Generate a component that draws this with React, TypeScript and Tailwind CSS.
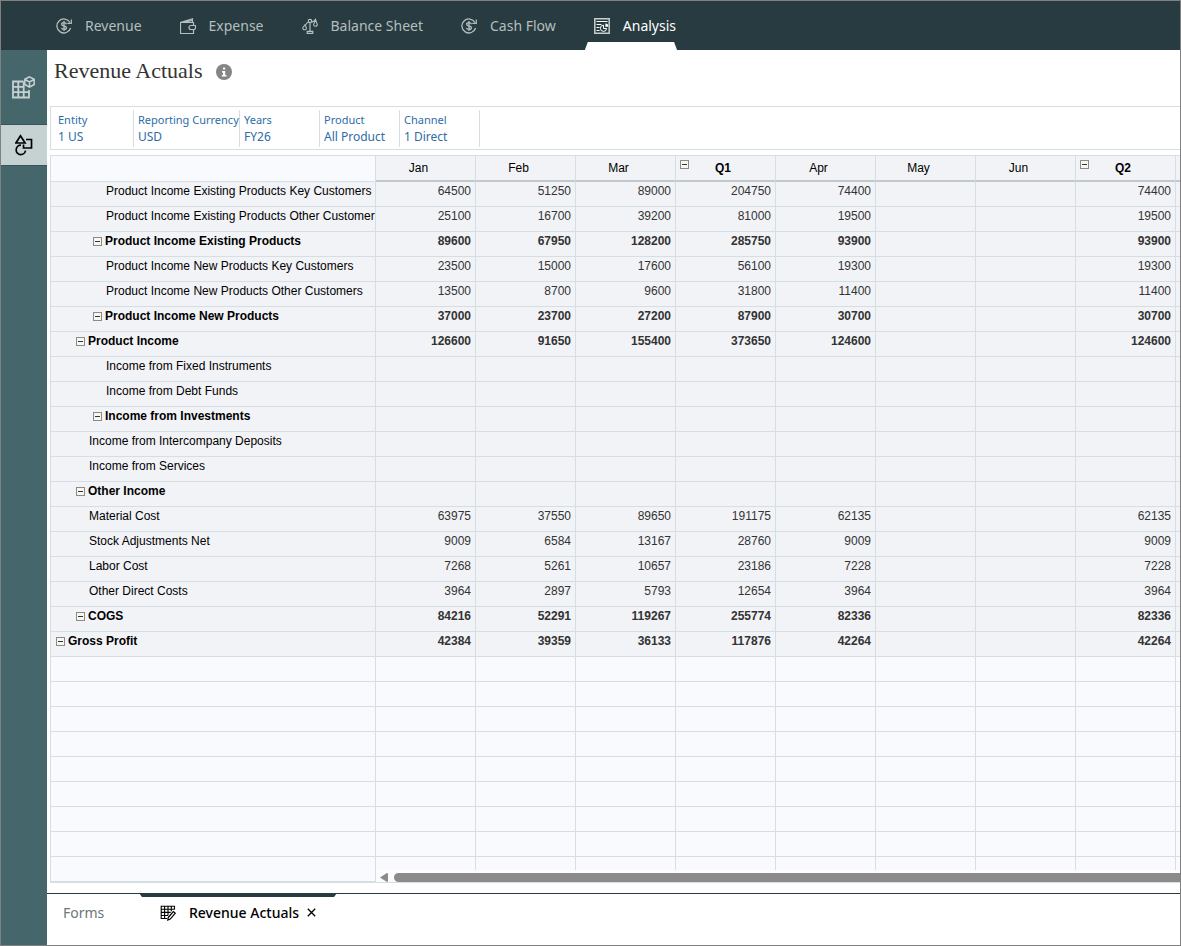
import clsx from 'clsx'
import { type ReactNode } from 'react'

const months = ['Jan', 'Feb', 'Mar', 'Q1', 'Apr', 'May', 'Jun', 'Q2']

type Row = {
  label: string
  indent: string
  total?: boolean
  values?: number[]
}

// values are Jan, Feb, Mar, Q1, Apr, Q2
const rows: Row[] = [
  { label: 'Product Income Existing Products Key Customers', indent: 'pl-[55px]', values: [64500, 51250, 89000, 204750, 74400, 74400] },
  { label: 'Product Income Existing Products Other Customer', indent: 'pl-[55px]', values: [25100, 16700, 39200, 81000, 19500, 19500] },
  { label: 'Product Income Existing Products', indent: 'pl-[42px]', total: true, values: [89600, 67950, 128200, 285750, 93900, 93900] },
  { label: 'Product Income New Products Key Customers', indent: 'pl-[55px]', values: [23500, 15000, 17600, 56100, 19300, 19300] },
  { label: 'Product Income New Products Other Customers', indent: 'pl-[55px]', values: [13500, 8700, 9600, 31800, 11400, 11400] },
  { label: 'Product Income New Products', indent: 'pl-[42px]', total: true, values: [37000, 23700, 27200, 87900, 30700, 30700] },
  { label: 'Product Income', indent: 'pl-[25px]', total: true, values: [126600, 91650, 155400, 373650, 124600, 124600] },
  { label: 'Income from Fixed Instruments', indent: 'pl-[55px]' },
  { label: 'Income from Debt Funds', indent: 'pl-[55px]' },
  { label: 'Income from Investments', indent: 'pl-[42px]', total: true },
  { label: 'Income from Intercompany Deposits', indent: 'pl-[38px]' },
  { label: 'Income from Services', indent: 'pl-[38px]' },
  { label: 'Other Income', indent: 'pl-[25px]', total: true },
  { label: 'Material Cost', indent: 'pl-[38px]', values: [63975, 37550, 89650, 191175, 62135, 62135] },
  { label: 'Stock Adjustments Net', indent: 'pl-[38px]', values: [9009, 6584, 13167, 28760, 9009, 9009] },
  { label: 'Labor Cost', indent: 'pl-[38px]', values: [7268, 5261, 10657, 23186, 7228, 7228] },
  { label: 'Other Direct Costs', indent: 'pl-[38px]', values: [3964, 2897, 5793, 12654, 3964, 3964] },
  { label: 'COGS', indent: 'pl-[25px]', total: true, values: [84216, 52291, 119267, 255774, 82336, 82336] },
  { label: 'Gross Profit', indent: 'pl-[5px]', total: true, values: [42384, 39359, 36133, 117876, 42264, 42264] },
]

const valueIndex = [0, 1, 2, 3, 4, -1, -1, 5]

const dimensions = [
  { name: 'Entity', member: '1 US', className: 'w-[83px] pl-[7px]' },
  { name: 'Reporting Currency', member: 'USD', className: 'w-[106px] pl-1' },
  { name: 'Years', member: 'FY26', className: 'w-20 pl-1' },
  { name: 'Product', member: 'All Product', className: 'w-20 pl-1' },
  { name: 'Channel', member: '1 Direct', className: 'w-20 pl-1' },
]

function Svg({ children, size = 'size-4', box = '0 0 16 16' }: { children: ReactNode; size?: string; box?: string }) {
  return (
    <svg viewBox={box} className={clsx('shrink-0', size)} fill="none" stroke="currentColor" aria-hidden="true">
      {children}
    </svg>
  )
}

function MoneyIcon() {
  return (
    <Svg>
      <path d="M14 4.500A7 7 0 1 0 14.600 10" strokeWidth="1.300" />
      <path d="M15.300 1.500v3.800h-4" strokeWidth="1.200" />
      <path d="M10.500 6.200c-.3-1-1.200-1.500-2.500-1.500-1.500 0-2.400.6-2.400 1.600C5.600 8.700 10.500 7.300 10.500 9.700c0 1.100-1 1.700-2.500 1.700-1.400 0-2.300-.5-2.600-1.500M8 3v10" strokeWidth="1.300" />
    </Svg>
  )
}

function WalletIcon() {
  return (
    <Svg>
      <path d="M.5 4.500h13v3M13.500 11.500v4H.5v-11L12.500.8v3.700M4 4.300l8-2" strokeWidth="1.200" />
      <path d="M15.500 7.500H11a2 2 0 0 0 0 4h3.500l1-1z" strokeWidth="1.200" />
    </Svg>
  )
}

function ScalesIcon() {
  return (
    <Svg>
      <path d="M8 5v8.500M5.200 15.400h5.600v-2H5.200zM3.300 7.500C4.500 5 5 4.300 6.500 4M9.500 3.800c1.500.4 2.800-.8 4.200-2.500" strokeWidth="1.200" />
      <circle cx="8" cy="3" r="1.700" strokeWidth="1.200" />
      <path d="M2.800 7 .8 9.800c-.3 2.600 3.700 2.600 3.700.2zM13.500 1.500l-1.900 5c0 2.300 3.800 2.300 3.700 0z" strokeWidth="1.100" />
    </Svg>
  )
}

function AnalysisIcon() {
  return (
    <Svg>
      <path d="M.8.8h14.400v14.400H.8z" strokeWidth="1.500" opacity=".75" />
      <path d="M2.500 3.500h11M2.500 6.500h5M2.500 9.500h3M2.500 12.500h3" strokeWidth="1.200" />
      <path d="M9.500 7.200a3.100 3.100 0 1 0 3.100 3.300H9.500z" />
      <path d="M11.300 5.500v3.200h3a3 3 0 0 0-3-3.200z" fill="currentColor" stroke="none" />
    </Svg>
  )
}

function CubeGridIcon() {
  return (
    <Svg size="h-[23px] w-6" box="0 0 24 23">
      <path d="M11.500 5.500H1v16h16V14M1 10.800h11M1 16.200h16M6.300 5.500v16M11.700 5.500v16" strokeWidth="1.800" />
      <path d="M17.500.8l4.700 2.500v5.200l-4.700 2.600-4.700-2.600V3.300zM12.800 3.500l4.700 2.500 4.700-2.500M17.500 6v5" strokeWidth="1.500" />
    </Svg>
  )
}

function ShapesIcon() {
  return (
    <Svg size="h-[22px] w-[18px]" box="0 0 18 22">
      <path d="M5.500 1.800.9 9h9.200z" strokeWidth="1.700" />
      <path d="M11 5.500h5.500V14H8.500v-3.500" strokeWidth="1.700" />
      <path d="M6 11.200a4.700 4.700 0 1 0 4.500 5.500" strokeWidth="1.700" />
    </Svg>
  )
}

function FormIcon() {
  return (
    <Svg>
      <path d="M14.500 4.500V1.200H1.200v12.300h6M1.200 4.300h13.300M1.200 7.400h9.500M1.200 10.500h7M4.600 1.200v12.300M8 1.200v9M11.300 1.200v5" strokeWidth="1.100" />
      <path d="m8.300 12.500 5-6 2 1.600-5 6-2.500.9z" fill="white" strokeWidth="1.200" />
    </Svg>
  )
}

const navItems = [
  { name: 'Revenue', icon: <MoneyIcon /> },
  { name: 'Expense', icon: <WalletIcon /> },
  { name: 'Balance Sheet', icon: <ScalesIcon /> },
  { name: 'Cash Flow', icon: <MoneyIcon /> },
  { name: 'Analysis', icon: <AnalysisIcon /> },
]

function Collapse({ label }: { label: string }) {
  return (
    <button
      type="button"
      aria-label={`Collapse ${label}`}
      className="flex size-[9px] shrink-0 items-center justify-center border border-[#8a8a8a] bg-[#f7f7f2]"
    >
      <span className="h-px w-[5px] bg-[#333]" />
    </button>
  )
}

function Header() {
  return (
    <header className="h-[49px] bg-[#273b40]">
      <nav className="flex h-full gap-[38px] pl-[55px]">
        {navItems.map((item) => {
          const active = item.name === 'Analysis'
          return (
            <a
              key={item.name}
              href="#"
              aria-current={active ? 'page' : undefined}
              className={clsx(
                'relative flex items-center gap-[13px] text-sm whitespace-nowrap',
                active ? 'text-white' : 'text-[#b5bebe]'
              )}
            >
              {item.icon}
              {item.name}
              {active && (
                <span className="absolute -right-px bottom-0 -left-[9px] h-2 bg-white [clip-path:polygon(3px_0,calc(100%-3px)_0,100%_100%,0_100%)]" />
              )}
            </a>
          )
        })}
      </nav>
    </header>
  )
}

function Sidebar() {
  return (
    <aside className="flex w-[46px] shrink-0 flex-col bg-[#45676c]">
      <button type="button" aria-label="Data grids" className="flex h-[74px] items-center justify-center text-[#c6d1d1]">
        <CubeGridIcon />
      </button>
      <button
        type="button"
        aria-label="Ad hoc"
        className="flex h-[42px] items-center justify-center border-y border-[#37545a] bg-[#c6d1d1] text-black"
      >
        <ShapesIcon />
      </button>
    </aside>
  )
}

function PointOfView() {
  return (
    <div className="flex border border-r-0 border-[#d5dee3] pt-[3px] pb-[2px]">
      {dimensions.map((dim) => (
        <button
          key={dim.name}
          type="button"
          className={clsx(
            'shrink-0 border-r border-[#d5dee3] pt-px pb-[2px] text-left leading-[17px] whitespace-nowrap text-[#2f6ca8]',
            dim.className
          )}
        >
          <span className="block text-[11px]">{dim.name}</span>
          <span className="block text-xs leading-[17px]">{dim.member}</span>
        </button>
      ))}
    </div>
  )
}

function Grid() {
  const line = 'border-[#d5dee3]'
  return (
    <div className="overflow-x-auto border border-r-0 border-[#d5dee3]">
      <table className="w-full min-w-[1125px] table-fixed border-separate border-spacing-0 font-['Liberation_Sans',Arial,sans-serif] text-xs leading-4">
        <colgroup>
          <col className="w-[325px]" />
          {months.map((m) => (
            <col key={m} className="w-[100px]" />
          ))}
          <col />
        </colgroup>
        <thead>
          <tr className="h-[26px]">
            <td className={clsx('border-r border-b bg-[#f8fafd]', line)} />
            {months.map((m) => (
              <th
                key={m}
                scope="col"
                className="border-r border-b-2 border-r-[#d5dee3] border-b-[#c2c9cd] bg-[#f2f3f7] p-0 text-black"
              >
                {m.startsWith('Q') ? (
                  <div className="flex pr-[18px] pl-1 font-bold">
                    <Collapse label={m} />
                    <span className="flex-1">{m}</span>
                  </div>
                ) : (
                  <div className="pr-[14px] font-normal">{m}</div>
                )}
              </th>
            ))}
            <td className="border-b-2 border-[#c2c9cd] bg-[#f2f3f7]" />
          </tr>
        </thead>
        <tbody>
          {rows.map((row) => (
            <tr key={row.label} className={clsx('h-[25px] bg-[#f2f3f7] align-top', row.total ? 'font-bold' : 'font-normal')}>
              <th scope="row" className={clsx('border-r border-b p-0 pt-px text-left text-black', line)}>
                <div className={clsx('flex items-center gap-[3px] whitespace-nowrap', row.indent, row.total ? 'font-bold' : 'font-normal')}>
                  {row.total && <Collapse label={row.label} />}
                  {row.label}
                </div>
              </th>
              {months.map((m, i) => (
                <td key={m} className={clsx('border-r border-b p-0 pt-px pr-1 text-right text-[#333]', line)}>
                  {row.values?.[valueIndex[i]]}
                </td>
              ))}
              <td className={clsx('border-b', line)} />
            </tr>
          ))}
          {Array.from({ length: 8 }, (_, r) => (
            <tr key={r} className="h-[25px] bg-[#f8fafd]">
              {Array.from({ length: 9 }, (_, c) => (
                <td key={c} className={clsx('border-r border-b', line)} />
              ))}
              <td className={clsx('border-b', line)} />
            </tr>
          ))}
          <tr className="h-[13px] bg-[#f8fafd]">
            <td rowSpan={2} className={clsx('border-r border-b', line)} />
            {months.map((m) => (
              <td key={m} className={clsx('border-r p-0', line)} />
            ))}
            <td className="p-0" />
          </tr>
          <tr className="h-3 bg-[#fcfcfc]">
            <td colSpan={9} className="p-0 pt-[3px] pl-1">
              <div className="flex items-center gap-[6px]">
                <button type="button" aria-label="Scroll left" className="text-[#8b8b8b]">
                  <svg viewBox="0 0 8 9" className="h-[9px] w-2" fill="currentColor" aria-hidden="true">
                    <path d="M0 4.500 7 0q1 0 1 1v7q0 1-1 1z" />
                  </svg>
                </button>
                <div className="h-[9px] flex-1 rounded-l-full bg-[#8b8b8b]" />
              </div>
            </td>
          </tr>
        </tbody>
      </table>
    </div>
  )
}

function FormTabs() {
  return (
    <footer className="mt-[10px] flex flex-1 border-t border-[#273b40] text-sm">
      <button type="button" className="h-[37px] w-[92px] pl-4 text-left text-[#6b7778]">
        Forms
      </button>
      <div className="relative flex h-[37px] w-[198px] items-center pl-[21px] text-black">
        <span className="absolute inset-x-0 -top-px h-1 bg-[#273b40] [clip-path:polygon(0_0,100%_0,calc(100%-3px)_100%,3px_100%)]" />
        <button type="button" className="flex items-center gap-[13px] font-medium whitespace-nowrap">
          <FormIcon />
          Revenue Actuals
        </button>
        <button type="button" aria-label="Close Revenue Actuals" className="ml-2">
          <svg viewBox="0 0 9 9" className="size-[9px]" stroke="currentColor" strokeWidth="1.300" aria-hidden="true">
            <path d="m.8.8 7.400 7.400M8.200.8.8 8.200" />
          </svg>
        </button>
      </div>
    </footer>
  )
}

export default function App() {
  return (
    <div className="flex min-h-screen flex-col border border-[#808080] bg-white font-['Noto_Sans','Open_Sans',sans-serif]">
      <Header />
      <div className="flex flex-1">
        <Sidebar />
        <main className="flex min-w-0 flex-1 flex-col">
          <div className="flex h-14 items-start gap-[14px] pt-[7px] pl-[7px]">
            <h1 className="font-['Liberation_Serif',Georgia,serif] text-[22px] leading-7 text-[#333]">Revenue Actuals</h1>
            <button type="button" aria-label="Information" className="mt-[7px]">
              <svg viewBox="0 0 16 16" className="size-4" aria-hidden="true">
                <circle cx="8" cy="8" r="8" fill="#858585" />
                <path d="M7 3.500h2.200v2H7zM6 7h3.200v4H10.500v1.500H5.800V11H7V8.500H6z" fill="white" />
              </svg>
            </button>
          </div>
          <div className="flex flex-col gap-[5px] pl-[3px]">
            <PointOfView />
            <Grid />
          </div>
          <FormTabs />
        </main>
      </div>
    </div>
  )
}
